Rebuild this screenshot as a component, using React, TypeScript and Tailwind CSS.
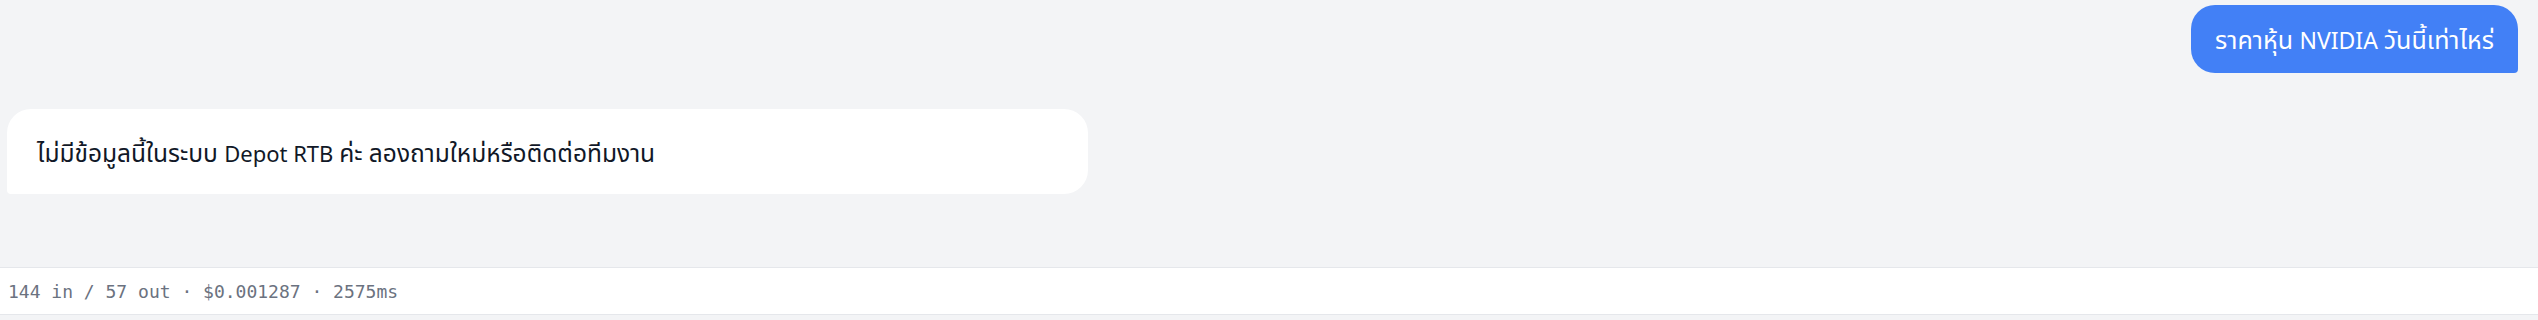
import React from "react";

export default function App() {
  return (
    <div
      className="w-full h-[320px] bg-[#f3f4f6] flex flex-col overflow-hidden"
      style={{ fontFamily: '"Noto Sans", "Noto Sans Thai", Roboto, sans-serif' }}
    >
      <div className="flex flex-col flex-none h-[267px]">
        <div className="flex justify-end pr-[20px] pt-[5px]">
          <div className="h-[68px] px-[24px] flex items-center bg-[#4280f6] text-white rounded-[24px] rounded-br-[4px] whitespace-pre">
            <span className="text-[23px] leading-[32px]">
              <span className="text-[25px]">ราคาหุ้น </span>
              <span>NVIDIA </span>
              <span className="text-[25px]">วันนี้เท่าไหร่</span>
            </span>
          </div>
        </div>
        <div className="flex pl-[7px] pt-[36px]">
          <div className="w-[1081px] h-[85px] bg-white rounded-[24px] rounded-bl-[4px] pl-[30px] pt-[3px] flex items-center text-[#111827] whitespace-pre">
            <span className="text-[22px] leading-[32px]">
              <span className="text-[24.5px]">ไม่มีข้อมูลนี้ในระบบ </span>
              <span>Depot RTB </span>
              <span className="text-[24.5px]">ค่ะ ลองถามใหม่หรือติดต่อทีมงาน</span>
            </span>
          </div>
        </div>
      </div>
      <div className="h-[48px] flex-none bg-white border-y border-[#e5e7eb] flex items-center pl-[8px]">
        <span
          className="text-[18px] text-[#6b7280] whitespace-pre"
          style={{ fontFamily: '"DejaVu Sans Mono", "Liberation Mono", monospace' }}
        >
          144 in / 57 out · $0.001287 · 2575ms
        </span>
      </div>
    </div>
  );
}
